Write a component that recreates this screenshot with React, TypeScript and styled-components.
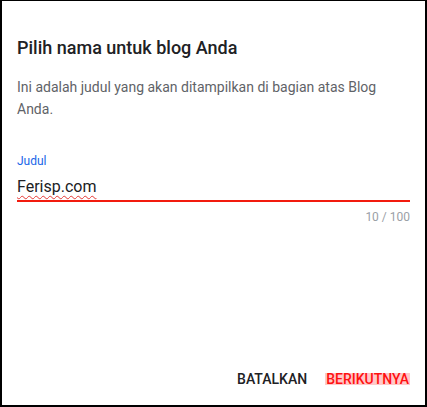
import React from 'react';
import styled, { createGlobalStyle } from 'styled-components';

const GlobalStyle = createGlobalStyle`
  html, body {
    margin: 0;
    padding: 0;
    background: #ffffff;
  }
  body {
    font-family: Roboto, "Liberation Sans", Arial, sans-serif;
  }
`;

const Dialog = styled.div`
  box-sizing: border-box;
  width: 427px;
  height: 407px;
  display: flex;
  flex-direction: column;
  background: #ffffff;
  border-style: solid;
  border-color: #000000;
  border-width: 1px 2px 2px 2px;
  padding: 35px 15px 0 15px;
`;

const Title = styled.h2`
  margin: 0;
  font-size: 18px;
  line-height: 24px;
  font-weight: 500;
  color: #202124;
`;

const Description = styled.p`
  margin: 16px 0 0 0;
  font-size: 14px;
  line-height: 22px;
  color: #5f6368;
`;

const Field = styled.div`
  margin-top: 33px;
  display: flex;
  flex-direction: column;
`;

const Label = styled.label`
  font-size: 12px;
  line-height: 16px;
  color: #1a66e8;
`;

const InputLine = styled.div`
  margin-top: 8px;
  padding-bottom: 3px;
  border-bottom: 2px solid #f21b0e;
  font-size: 16px;
  line-height: 20px;
  color: #202124;
`;

const Misspelled = styled.span`
  text-decoration: underline wavy #e53935;
  text-decoration-thickness: 1px;
  text-underline-offset: 3px;
`;

const Counter = styled.div`
  margin-top: 7px;
  text-align: right;
  font-size: 12px;
  line-height: 16px;
  color: #9aa0a6;
`;

const Footer = styled.div`
  margin-top: auto;
  display: flex;
  justify-content: flex-end;
  align-items: center;
  gap: 17px;
  padding: 0 0 20px 0;
`;

const Action = styled.span<{ $primary?: boolean }>`
  display: inline-block;
  font-size: 14px;
  line-height: 12px;
  font-weight: 500;
  color: ${({ $primary }) => ($primary ? '#ff1111' : '#202124')};
  background: ${({ $primary }) => ($primary ? '#ffc9c9' : 'transparent')};
  padding: 0 1px;
  cursor: pointer;
`;

const App = () => {
  return (
    <>
      <GlobalStyle />
      <Dialog>
        <Title>Pilih nama untuk blog Anda</Title>
        <Description>
          Ini adalah judul yang akan ditampilkan di bagian atas Blog Anda.
        </Description>
        <Field>
          <Label>Judul</Label>
          <InputLine>
            <Misspelled>Ferisp.com</Misspelled>
          </InputLine>
          <Counter>10 / 100</Counter>
        </Field>
        <Footer>
          <Action>BATALKAN</Action>
          <Action $primary>BERIKUTNYA</Action>
        </Footer>
      </Dialog>
    </>
  );
};

export default App;
